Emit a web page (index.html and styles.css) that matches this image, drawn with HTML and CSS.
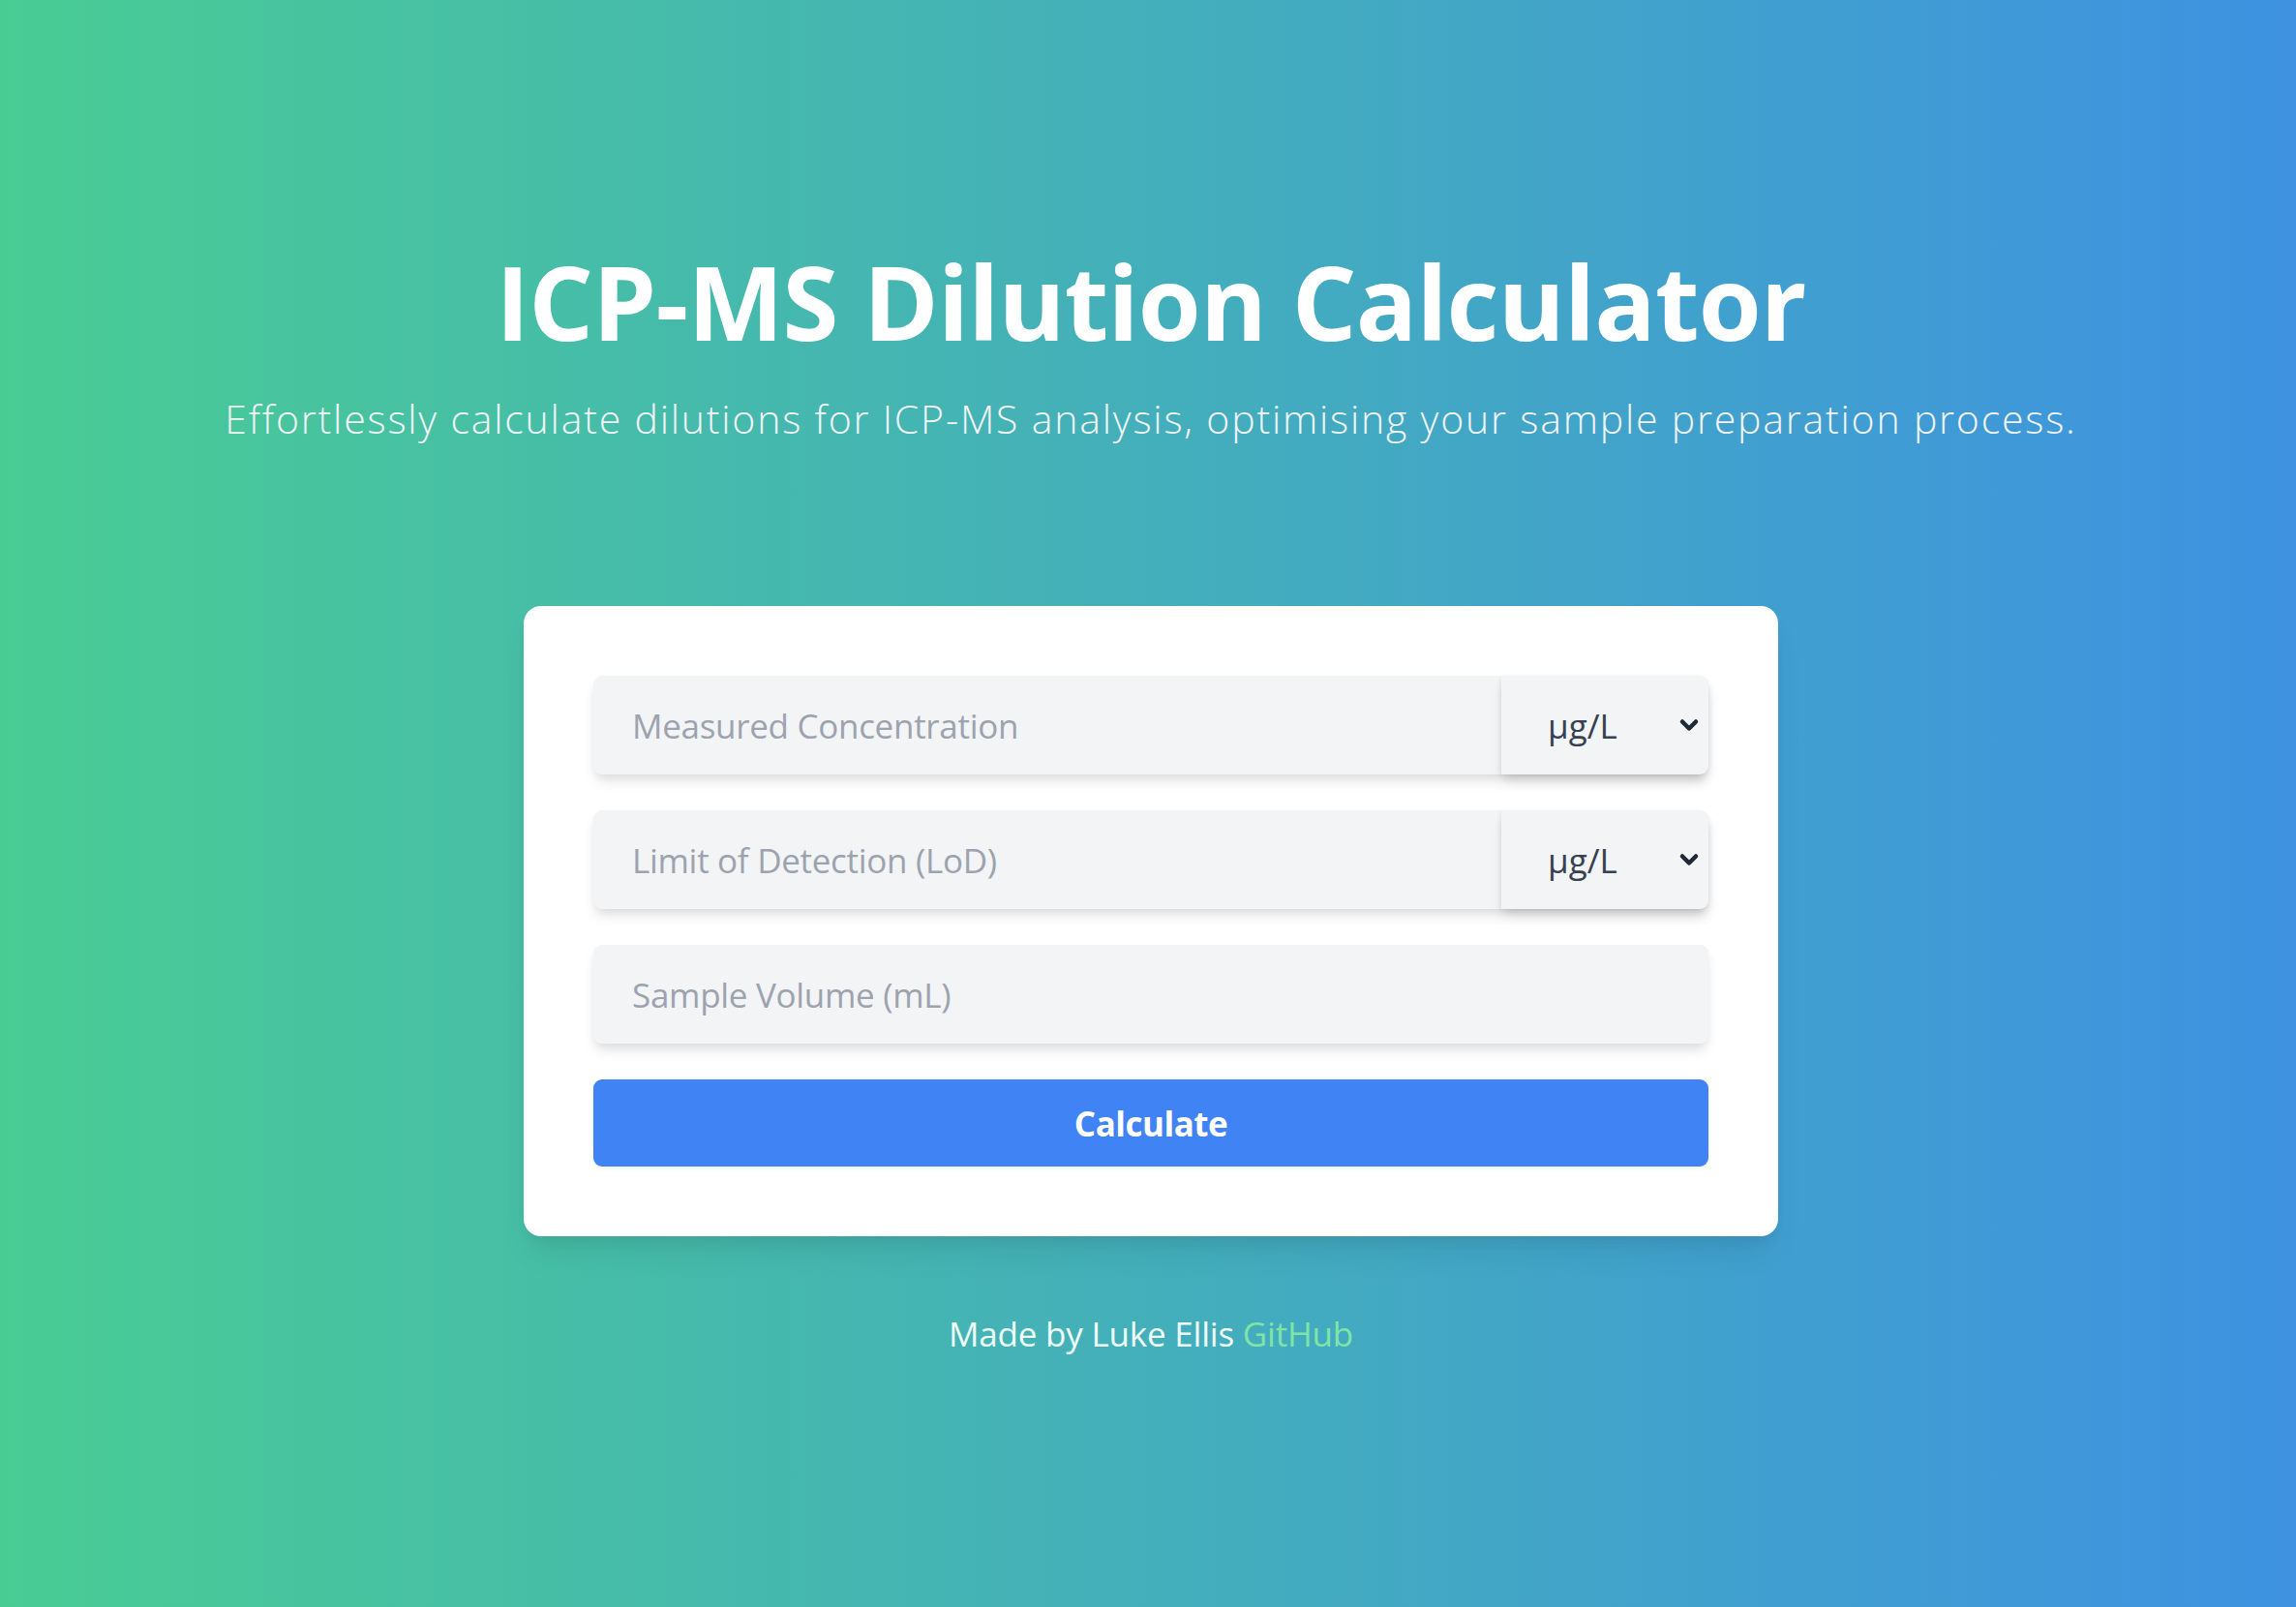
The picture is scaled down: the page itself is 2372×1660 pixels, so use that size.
FILE: index.html
```html
<!DOCTYPE html>
<html lang="en">
<head>
<meta charset="utf-8">
<title>ICP-MS Dilution Calculator</title>
<link rel="stylesheet" href="styles.css">
</head>
<body>
<div class="page">
  <header class="hero">
    <h1 class="title">ICP-MS Dilution Calculator</h1>
    <p class="subtitle">Effortlessly calculate dilutions for ICP-MS analysis, optimising your sample preparation process.</p>
  </header>
  <main class="card">
    <form class="form">
      <div class="field-row">
        <input class="field field-grow" type="text" placeholder="Measured Concentration">
        <div class="unit">
          <select class="unit-select">
            <option>µg/L</option>
            <option>mg/L</option>
            <option>ng/L</option>
          </select>
          <svg class="chevron" viewBox="0 0 20 20" aria-hidden="true"><path d="M5 7.5l5 5 5-5" fill="none" stroke="#1f2937" stroke-width="3.2" stroke-linecap="round" stroke-linejoin="round"/></svg>
        </div>
      </div>
      <div class="field-row">
        <input class="field field-grow" type="text" placeholder="Limit of Detection (LoD)">
        <div class="unit">
          <select class="unit-select">
            <option>µg/L</option>
            <option>mg/L</option>
            <option>ng/L</option>
          </select>
          <svg class="chevron" viewBox="0 0 20 20" aria-hidden="true"><path d="M5 7.5l5 5 5-5" fill="none" stroke="#1f2937" stroke-width="3.2" stroke-linecap="round" stroke-linejoin="round"/></svg>
        </div>
      </div>
      <div class="field-row">
        <input class="field field-grow" type="text" placeholder="Sample Volume (mL)">
      </div>
      <button class="btn" type="button">Calculate</button>
    </form>
  </main>
  <footer class="footer">Made by Luke Ellis <a class="footer-link" href="#">GitHub</a></footer>
</div>
</body>
</html>
```

FILE: styles.css
```css
* { box-sizing: border-box; }

html, body {
  margin: 0;
  padding: 0;
}

body {
  min-height: 100vh;
  background: linear-gradient(to right, rgb(73, 204, 148), rgb(62, 146, 225));
  font-family: "Open Sans", "Noto Sans", sans-serif;
  color: #ffffff;
}

.page {
  min-height: 100vh;
  display: flex;
  flex-direction: column;
  align-items: center;
  padding-top: 259px;
  padding-left: 6px;
}

.hero {
  text-align: center;
}

.title {
  margin: 0;
  font-size: 105px;
  line-height: 1;
  font-weight: 700;
  letter-spacing: -0.8px;
  color: #ffffff;
}

.subtitle {
  margin: 41px 0 0;
  font-size: 41px;
  line-height: 55px;
  font-weight: 300;
  letter-spacing: 1.8px;
  color: #f3f4f6;
}

.card {
  margin-top: 166px;
  width: 1296px;
  background: #ffffff;
  border-radius: 18px;
  padding: 72px;
  box-shadow: 0 22px 34px -7px rgba(0, 0, 0, 0.08), 0 9px 13px -4px rgba(0, 0, 0, 0.05);
}

.form {
  display: flex;
  flex-direction: column;
  gap: 37px;
}

.field-row {
  display: flex;
  height: 102px;
  border-radius: 9px;
  box-shadow: 0 9px 13px -2px rgba(0, 0, 0, 0.1), 0 4px 9px -2px rgba(0, 0, 0, 0.06);
  background: #f3f4f6;
}

.field {
  height: 100%;
  border: 0;
  outline: none;
  background: #f3f4f6;
  border-radius: 9px;
  padding: 0 36px 0 40px;
  font-family: "Open Sans", "Noto Sans", sans-serif;
  font-size: 35px;
  letter-spacing: -0.3px;
  color: #374151;
}

.field::placeholder {
  color: #9ca3af;
}

.field-grow {
  flex: 1;
  min-width: 0;
}

.unit {
  position: relative;
  width: 214px;
  flex: none;
  height: 100%;
}

.unit-select {
  width: 100%;
  height: 100%;
  appearance: none;
  -webkit-appearance: none;
  border: 0;
  outline: none;
  background: #f3f4f6;
  border-radius: 0 9px 9px 0;
  padding: 0 0 0 48px;
  font-family: "Open Sans", "Noto Sans", sans-serif;
  font-size: 35px;
  color: #374151;
  box-shadow: -2px 0 4px rgba(0, 0, 0, 0.04), 0 9px 13px -2px rgba(0, 0, 0, 0.1), 0 4px 9px -2px rgba(0, 0, 0, 0.06);
}

.chevron {
  position: absolute;
  right: 6px;
  top: 50%;
  width: 28px;
  height: 28px;
  margin-top: -14px;
  pointer-events: none;
}

.btn {
  height: 90px;
  border: 0;
  border-radius: 9px;
  background: #3f83f4;
  color: #ffffff;
  font-family: "Open Sans", "Noto Sans", sans-serif;
  font-size: 35px;
  font-weight: 700;
  letter-spacing: -0.5px;
  box-shadow: 0 2px 4px rgba(0, 0, 0, 0.06);
  cursor: pointer;
}

.footer {
  margin-top: 76px;
  font-size: 35px;
  line-height: 50px;
  letter-spacing: -0.2px;
  color: #f0fdf7;
}

.footer-link {
  color: #80e4a6;
  text-decoration: none;
}
```
